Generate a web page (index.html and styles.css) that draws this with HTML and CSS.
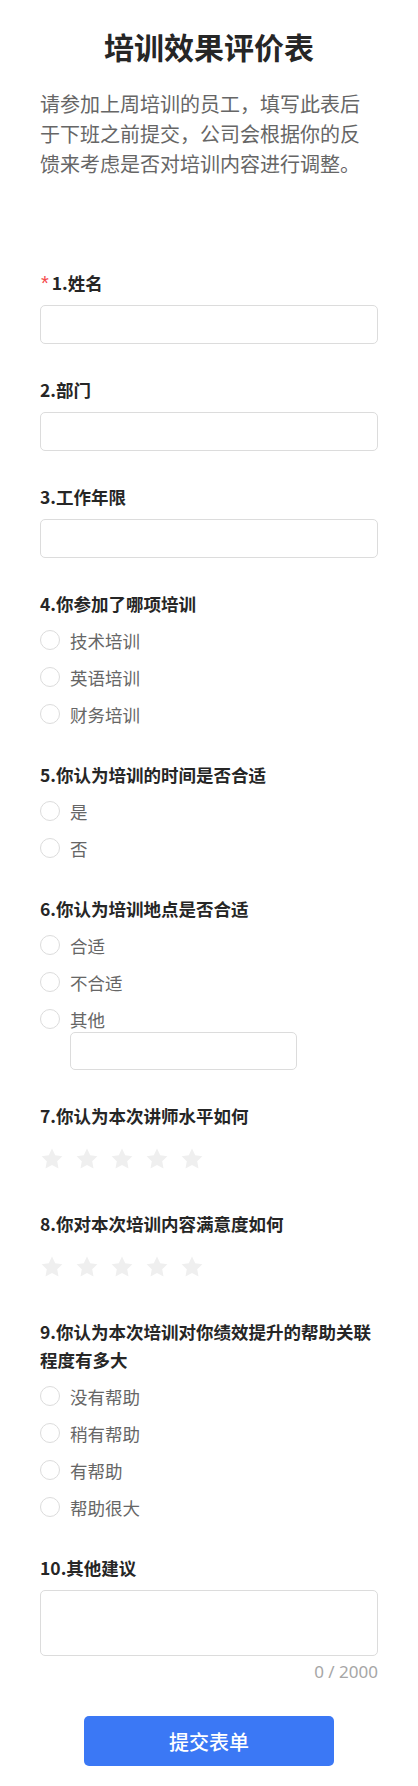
FILE: index.html
```html
<!DOCTYPE html>
<html lang="zh-CN">
<head>
<meta charset="utf-8">
<title>培训效果评价表</title>
<link rel="stylesheet" href="styles.css">
</head>
<body>
<main class="page">
  <h1 class="title">培训效果评价表</h1>
  <p class="desc">请参加上周培训的员工，填写此表后于下班之前提交，公司会根据你的反馈来考虑是否对培训内容进行调整。</p>

  <form class="form">
    <div class="q">
      <div class="label"><span class="req">*</span>1.姓名</div>
      <div class="input"></div>
    </div>
    <div class="q">
      <div class="label">2.部门</div>
      <div class="input"></div>
    </div>
    <div class="q">
      <div class="label">3.工作年限</div>
      <div class="input"></div>
    </div>
    <div class="q">
      <div class="label">4.你参加了哪项培训</div>
      <div class="opts">
        <div class="opt"><span class="radio"></span><span class="opt-text">技术培训</span></div>
        <div class="opt"><span class="radio"></span><span class="opt-text">英语培训</span></div>
        <div class="opt"><span class="radio"></span><span class="opt-text">财务培训</span></div>
      </div>
    </div>
    <div class="q">
      <div class="label">5.你认为培训的时间是否合适</div>
      <div class="opts">
        <div class="opt"><span class="radio"></span><span class="opt-text">是</span></div>
        <div class="opt"><span class="radio"></span><span class="opt-text">否</span></div>
      </div>
    </div>
    <div class="q">
      <div class="label">6.你认为培训地点是否合适</div>
      <div class="opts">
        <div class="opt"><span class="radio"></span><span class="opt-text">合适</span></div>
        <div class="opt"><span class="radio"></span><span class="opt-text">不合适</span></div>
        <div class="opt"><span class="radio"></span><span class="opt-text">其他</span></div>
      </div>
      <div class="other-input"></div>
    </div>
    <div class="q">
      <div class="label">7.你认为本次讲师水平如何</div>
      <div class="stars">
        <svg class="star" viewBox="0 0 24 24"><path d="M12 1.6l3.2 6.6 7.2 1-5.2 5.1 1.3 7.2L12 18.1l-6.5 3.4 1.3-7.2-5.2-5.1 7.2-1z"/></svg>
        <svg class="star" viewBox="0 0 24 24"><path d="M12 1.6l3.2 6.6 7.2 1-5.2 5.1 1.3 7.2L12 18.1l-6.5 3.4 1.3-7.2-5.2-5.1 7.2-1z"/></svg>
        <svg class="star" viewBox="0 0 24 24"><path d="M12 1.6l3.2 6.6 7.2 1-5.2 5.1 1.3 7.2L12 18.1l-6.5 3.4 1.3-7.2-5.2-5.1 7.2-1z"/></svg>
        <svg class="star" viewBox="0 0 24 24"><path d="M12 1.6l3.2 6.6 7.2 1-5.2 5.1 1.3 7.2L12 18.1l-6.5 3.4 1.3-7.2-5.2-5.1 7.2-1z"/></svg>
        <svg class="star" viewBox="0 0 24 24"><path d="M12 1.6l3.2 6.6 7.2 1-5.2 5.1 1.3 7.2L12 18.1l-6.5 3.4 1.3-7.2-5.2-5.1 7.2-1z"/></svg>
      </div>
    </div>
    <div class="q">
      <div class="label">8.你对本次培训内容满意度如何</div>
      <div class="stars">
        <svg class="star" viewBox="0 0 24 24"><path d="M12 1.6l3.2 6.6 7.2 1-5.2 5.1 1.3 7.2L12 18.1l-6.5 3.4 1.3-7.2-5.2-5.1 7.2-1z"/></svg>
        <svg class="star" viewBox="0 0 24 24"><path d="M12 1.6l3.2 6.6 7.2 1-5.2 5.1 1.3 7.2L12 18.1l-6.5 3.4 1.3-7.2-5.2-5.1 7.2-1z"/></svg>
        <svg class="star" viewBox="0 0 24 24"><path d="M12 1.6l3.2 6.6 7.2 1-5.2 5.1 1.3 7.2L12 18.1l-6.5 3.4 1.3-7.2-5.2-5.1 7.2-1z"/></svg>
        <svg class="star" viewBox="0 0 24 24"><path d="M12 1.6l3.2 6.6 7.2 1-5.2 5.1 1.3 7.2L12 18.1l-6.5 3.4 1.3-7.2-5.2-5.1 7.2-1z"/></svg>
        <svg class="star" viewBox="0 0 24 24"><path d="M12 1.6l3.2 6.6 7.2 1-5.2 5.1 1.3 7.2L12 18.1l-6.5 3.4 1.3-7.2-5.2-5.1 7.2-1z"/></svg>
      </div>
    </div>
    <div class="q">
      <div class="label">9.你认为本次培训对你绩效提升的帮助关联程度有多大</div>
      <div class="opts">
        <div class="opt"><span class="radio"></span><span class="opt-text">没有帮助</span></div>
        <div class="opt"><span class="radio"></span><span class="opt-text">稍有帮助</span></div>
        <div class="opt"><span class="radio"></span><span class="opt-text">有帮助</span></div>
        <div class="opt"><span class="radio"></span><span class="opt-text">帮助很大</span></div>
      </div>
    </div>
    <div class="q q-last">
      <div class="label">10.其他建议</div>
      <div class="textarea"></div>
      <div class="counter">0 / 2000</div>
    </div>
    <div class="actions">
      <button type="button" class="submit">提交表单</button>
    </div>
  </form>
</main>
</body>
</html>
```

FILE: styles.css
```css
* { box-sizing: border-box; }
html, body { margin: 0; padding: 0; background: #fff; }
body {
  font-family: "Noto Sans CJK SC", "Noto Sans", sans-serif;
  color: #333;
}
.page {
  width: 418px;
  padding: 26px 40px 20px;
}
.title {
  margin: 0;
  font-size: 30px;
  line-height: 40px;
  font-weight: 700;
  text-align: center;
  color: #262626;
}
.desc {
  margin: 23px 0 0;
  font-size: 20px;
  line-height: 30px;
  color: #666;
  font-weight: 400;
}
.form {
  margin-top: 90px;
}
.q {
  margin-bottom: 32px;
}
.q-last { margin-bottom: 0; }
.label {
  font-size: 17.5px;
  line-height: 28px;
  font-weight: 700;
  color: #262626;
}
.req {
  color: #f5474a;
  font-family: "Liberation Sans", sans-serif;
  font-weight: 400;
  font-size: 20px;
  line-height: 1;
  margin-right: 3px;
  margin-left: 1px;
}
.input {
  margin-top: 8px;
  height: 39px;
  border: 1px solid #dcdcdc;
  border-radius: 5px;
}
.opts {
  margin-top: 7px;
  display: flex;
  flex-direction: column;
  gap: 7px;
}
.opt {
  display: flex;
  align-items: center;
  height: 30px;
}
.radio {
  width: 20px;
  height: 20px;
  border: 1px solid #dcdcdc;
  border-radius: 50%;
  flex: none;
}
.opt-text {
  margin-left: 10px;
  font-size: 17.5px;
  color: #666;
  font-weight: 400;
}
.other-input {
  margin: -2px 0 0 30px;
  width: 227px;
  height: 38px;
  border: 1px solid #dcdcdc;
  border-radius: 5px;
}
.stars {
  margin-top: 10px;
  height: 38px;
  display: flex;
  align-items: center;
  gap: 11px;
}
.star {
  width: 24px;
  height: 24px;
  fill: #efefef;
}
.textarea {
  margin-top: 8px;
  height: 66px;
  border: 1px solid #dcdcdc;
  border-radius: 5px;
}
.counter {
  text-align: right;
  font-family: "Noto Sans", sans-serif;
  font-size: 17px;
  line-height: 24px;
  margin-top: 4px;
  color: #a6a6a6;
}
.actions {
  margin-top: 32px;
  display: flex;
  justify-content: center;
}
.submit {
  width: 250px;
  height: 50px;
  border: none;
  border-radius: 5px;
  background: #3b78f5;
  color: #fff;
  font-family: "Noto Sans CJK SC", sans-serif;
  font-size: 20px;
  font-weight: 500;
}
```
